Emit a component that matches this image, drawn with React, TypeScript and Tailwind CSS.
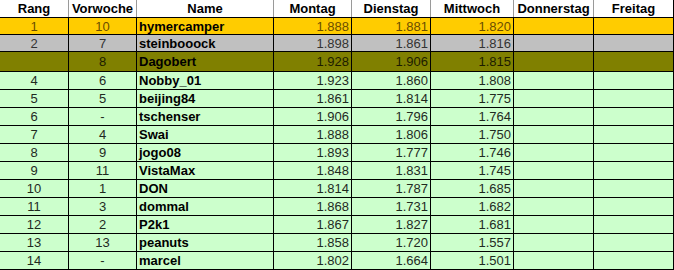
import React from 'react';

type Row = {
  rang: string;
  vorwoche: string;
  name: string;
  mo: string;
  di: string;
  mi: string;
  h: string;
  bg: string;
  fg: string;
};

const rows: Row[] = [
  { rang: '1', vorwoche: '10', name: 'hymercamper', mo: '1.888', di: '1.881', mi: '1.820', h: 'h-[17px]', bg: 'bg-[#ffcc00]', fg: 'text-[#6b4e00]' },
  { rang: '2', vorwoche: '7', name: 'steinbooock', mo: '1.898', di: '1.861', mi: '1.816', h: 'h-[17px]', bg: 'bg-[#c0c0c0]', fg: 'text-[#333333]' },
  { rang: '', vorwoche: '8', name: 'Dagobert', mo: '1.928', di: '1.906', mi: '1.815', h: 'h-[20px]', bg: 'bg-[#808000]', fg: 'text-[#1c1c00]' },
  { rang: '4', vorwoche: '6', name: 'Nobby_01', mo: '1.923', di: '1.860', mi: '1.808', h: 'h-[18px]', bg: 'bg-[#ccffcc]', fg: 'text-[#1f2a1f]' },
  { rang: '5', vorwoche: '5', name: 'beijing84', mo: '1.861', di: '1.814', mi: '1.775', h: 'h-[18px]', bg: 'bg-[#ccffcc]', fg: 'text-[#1f2a1f]' },
  { rang: '6', vorwoche: '-', name: 'tschenser', mo: '1.906', di: '1.796', mi: '1.764', h: 'h-[18px]', bg: 'bg-[#ccffcc]', fg: 'text-[#1f2a1f]' },
  { rang: '7', vorwoche: '4', name: 'Swai', mo: '1.888', di: '1.806', mi: '1.750', h: 'h-[18px]', bg: 'bg-[#ccffcc]', fg: 'text-[#1f2a1f]' },
  { rang: '8', vorwoche: '9', name: 'jogo08', mo: '1.893', di: '1.777', mi: '1.746', h: 'h-[18px]', bg: 'bg-[#ccffcc]', fg: 'text-[#1f2a1f]' },
  { rang: '9', vorwoche: '11', name: 'VistaMax', mo: '1.848', di: '1.831', mi: '1.745', h: 'h-[18px]', bg: 'bg-[#ccffcc]', fg: 'text-[#1f2a1f]' },
  { rang: '10', vorwoche: '1', name: 'DON', mo: '1.814', di: '1.787', mi: '1.685', h: 'h-[18px]', bg: 'bg-[#ccffcc]', fg: 'text-[#1f2a1f]' },
  { rang: '11', vorwoche: '3', name: 'dommal', mo: '1.868', di: '1.731', mi: '1.682', h: 'h-[18px]', bg: 'bg-[#ccffcc]', fg: 'text-[#1f2a1f]' },
  { rang: '12', vorwoche: '2', name: 'P2k1', mo: '1.867', di: '1.827', mi: '1.681', h: 'h-[18px]', bg: 'bg-[#ccffcc]', fg: 'text-[#1f2a1f]' },
  { rang: '13', vorwoche: '13', name: 'peanuts', mo: '1.858', di: '1.720', mi: '1.557', h: 'h-[18px]', bg: 'bg-[#ccffcc]', fg: 'text-[#1f2a1f]' },
  { rang: '14', vorwoche: '-', name: 'marcel', mo: '1.802', di: '1.664', mi: '1.501', h: 'h-[18px]', bg: 'bg-[#ccffcc]', fg: 'text-[#1f2a1f]' },
];

const cols = 'grid grid-cols-[69px_68px_137px_78px_79px_83px_80px_80px]';
const headers = ['Rang', 'Vorwoche', 'Name', 'Montag', 'Dienstag', 'Mittwoch', 'Donnerstag', 'Freitag'];

export default function App() {
  return (
    <div className="w-[674px] h-[270px] bg-white overflow-hidden font-['Liberation_Sans',Arial,sans-serif] text-[13px] leading-none">
      {/* Header */}
      <div className={`${cols} h-[18px] bg-white border-b border-black`}>
        {headers.map((h, i) => (
          <div
            key={h}
            className={`flex items-center justify-center font-bold text-black ${i < 7 ? 'border-r border-[#9a9a9a]' : ''} ${i === 7 ? 'border-r border-black' : ''}`}
          >
            {h}
          </div>
        ))}
      </div>

      {/* Rows */}
      {rows.map((r) => (
        <div key={r.name} className={`${cols} ${r.h} ${r.bg} border-b border-black`}>
          <div className={`flex items-center justify-center border-r border-black ${r.fg}`}>{r.rang}</div>
          <div className={`flex items-center justify-center border-r border-black ${r.fg}`}>{r.vorwoche}</div>
          <div className="flex items-center pl-[2px] border-r border-black font-bold text-black">{r.name}</div>
          <div className={`flex items-center justify-end pr-[2px] border-r border-black ${r.fg}`}>{r.mo}</div>
          <div className={`flex items-center justify-end pr-[2px] border-r border-black ${r.fg}`}>{r.di}</div>
          <div className={`flex items-center justify-end pr-[2px] border-r border-black ${r.fg}`}>{r.mi}</div>
          <div className="border-r border-black" />
          <div className="border-r border-black" />
        </div>
      ))}
    </div>
  );
}
